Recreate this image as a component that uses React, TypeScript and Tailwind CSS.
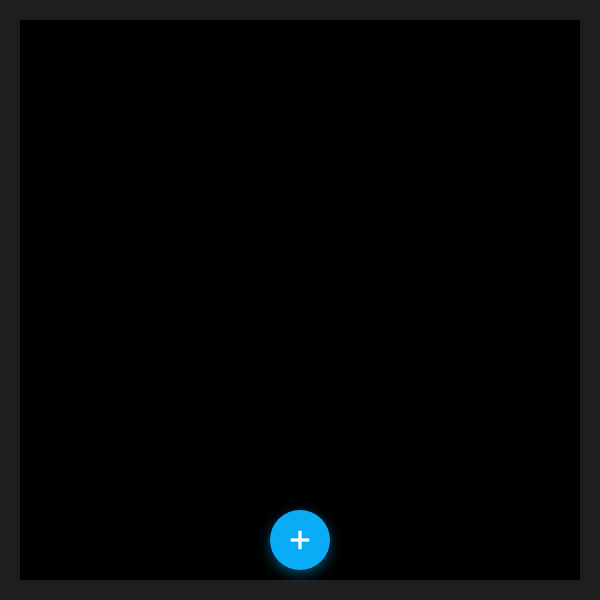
import { Plus } from "lucide-react";

export default function App() {
  return (
    <div className="w-[600px] h-[600px] bg-[#1e1e1e] p-5">
      <div className="w-full h-full bg-black flex flex-col justify-end items-center pb-[10px]">
        <button className="w-[60px] h-[60px] rounded-full bg-[#0aadf5] flex items-center justify-center text-white shadow-[0_4px_14px_rgba(3,169,244,0.45)]">
          <Plus className="w-[26px] h-[26px]" strokeWidth={3} strokeLinecap="square" />
        </button>
      </div>
    </div>
  );
}
